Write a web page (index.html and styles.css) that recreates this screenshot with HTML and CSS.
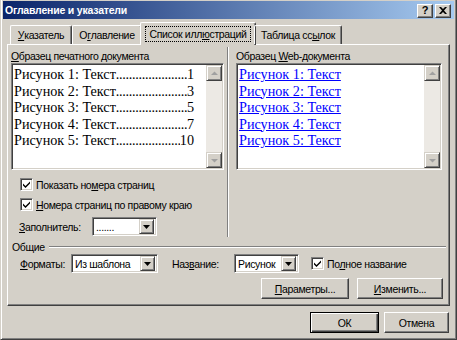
FILE: index.html
```html
<!DOCTYPE html>
<html>
<head>
  <title>Оглавление и указатели</title>
  <link rel="stylesheet" href="styles.css">
</head>
<body>
  <div class="window">
    <div class="titlebar">
      <span class="title">Оглавление и указатели</span>
      <div class="caption-buttons">
        <span class="cap-btn help">?</span>
        <span class="cap-btn">
          <svg width="8" height="7" viewBox="0 0 8 7"><path d="M0 0h2l2 2 2-2h2L5 3.5 8 7H6L4 5 2 7H0l3-3.5z" fill="#000"/></svg>
        </span>
      </div>
    </div>

    <div class="tabs">
      <div class="tab t1"><u>У</u>казатель</div>
      <div class="tab t2">О<u>г</u>лавление</div>
      <div class="tab t3 active"><span class="focus">Список илл<u>ю</u>страций</span></div>
      <div class="tab t4">Таблица сс<u>ы</u>лок</div>
    </div>

    <div class="panel">
      <div class="previews">
        <div class="preview print">
          <div class="caption"><u>О</u>бразец печатного документа</div>
          <div class="listbox">
            <div class="lines">
              <div class="line"><span>Рисунок 1: Текст</span><span class="dots"></span><span>1</span></div>
              <div class="line"><span>Рисунок 2: Текст</span><span class="dots"></span><span>3</span></div>
              <div class="line"><span>Рисунок 3: Текст</span><span class="dots"></span><span>5</span></div>
              <div class="line"><span>Рисунок 4: Текст</span><span class="dots"></span><span>7</span></div>
              <div class="line"><span>Рисунок 5: Текст</span><span class="dots"></span><span>10</span></div>
            </div>
            <div class="scrollbar">
              <span class="arrow"><svg width="7" height="5" viewBox="0 0 7 5"><path d="M3.5 0.5L7 4H0z" fill="#a0a0a0"/></svg></span>
              <span class="track"></span>
              <span class="arrow"><svg width="7" height="5" viewBox="0 0 7 5"><path d="M0 1h7L3.5 4.5z" fill="#a0a0a0"/></svg></span>
            </div>
          </div>

          <div class="check-row first">
            <span class="checkbox"><svg width="7" height="7" viewBox="0 0 7 7"><path d="M0 2.5l2.5 2.5L7 0.5v2L2.5 7 0 4.5z" fill="#000"/></svg></span>
            <span>Показать но<u>м</u>ера страниц</span>
          </div>
          <div class="check-row">
            <span class="checkbox"><svg width="7" height="7" viewBox="0 0 7 7"><path d="M0 2.5l2.5 2.5L7 0.5v2L2.5 7 0 4.5z" fill="#000"/></svg></span>
            <span><u>Н</u>омера страниц по правому краю</span>
          </div>
          <div class="filler-row">
            <span class="field-label filler-label"><u>З</u>аполнитель:</span>
            <div class="combo filler">
              <span class="combo-text">.......</span>
              <span class="drop"><svg width="7" height="4" viewBox="0 0 7 4"><path d="M0 0h7L3.5 4z" fill="#000"/></svg></span>
            </div>
          </div>
        </div>

        <div class="preview web">
          <div class="caption">Образец <u>W</u>eb-документа</div>
          <div class="listbox">
            <div class="lines">
              <div class="line"><a href="#">Рисунок 1: Текст</a></div>
              <div class="line"><a href="#">Рисунок 2: Текст</a></div>
              <div class="line"><a href="#">Рисунок 3: Текст</a></div>
              <div class="line"><a href="#">Рисунок 4: Текст</a></div>
              <div class="line"><a href="#">Рисунок 5: Текст</a></div>
            </div>
            <div class="scrollbar">
              <span class="arrow"><svg width="7" height="5" viewBox="0 0 7 5"><path d="M3.5 0.5L7 4H0z" fill="#a0a0a0"/></svg></span>
              <span class="track"></span>
              <span class="arrow"><svg width="7" height="5" viewBox="0 0 7 5"><path d="M0 1h7L3.5 4.5z" fill="#a0a0a0"/></svg></span>
            </div>
          </div>
        </div>
      </div>

      <div class="group-title"><span>Общие</span></div>

      <div class="formats-row">
        <span class="field-label formats-label"><u>Ф</u>орматы:</span>
        <div class="combo formats">
          <span class="combo-text">Из шаблона</span>
          <span class="drop"><svg width="7" height="4" viewBox="0 0 7 4"><path d="M0 0h7L3.5 4z" fill="#000"/></svg></span>
        </div>
        <span class="field-label name-label">Наз<u>в</u>ание:</span>
        <div class="combo name">
          <span class="combo-text">Рисунок</span>
          <span class="drop"><svg width="7" height="4" viewBox="0 0 7 4"><path d="M0 0h7L3.5 4z" fill="#000"/></svg></span>
        </div>
        <span class="checkbox"><svg width="7" height="7" viewBox="0 0 7 7"><path d="M0 2.5l2.5 2.5L7 0.5v2L2.5 7 0 4.5z" fill="#000"/></svg></span>
        <span class="full-name">По<u>л</u>ное название</span>
      </div>

      <div class="panel-buttons">
        <span class="btn params"><u>П</u>араметры...</span>
        <span class="btn change"><u>И</u>зменить...</span>
      </div>
    </div>

    <div class="footer">
      <span class="btn ok">ОК</span>
      <span class="btn cancel">Отмена</span>
    </div>
  </div>
</body>
</html>
```

FILE: styles.css
```css
body {
  margin: 0;
  background: #d4d0c8;
  font-family: "Liberation Sans", Arial, sans-serif;
  font-size: 10px;
  letter-spacing: -0.35px;
  color: #000;
}
u {
  text-decoration: underline;
  text-underline-offset: 1px;
}
.window {
  width: 457px;
  height: 340px;
  box-sizing: border-box;
  background: #d4d0c8;
  border-left: 1px solid #d4d0c8;
  border-right: 1px solid #404040;
  border-bottom: 1px solid #404040;
  box-shadow: inset 1px 0 #fff, inset -1px -1px #808080;
  padding: 1px 2px 0 2px;
}

/* title bar */
.titlebar {
  height: 18px;
  display: flex;
  align-items: center;
  justify-content: space-between;
  background: linear-gradient(90deg, #0a246a 0%, #a6caf0 100%);
  padding: 0 3px 0 2px;
}
.title {
  color: #fff;
  font-weight: bold;
  font-size: 10.5px;
  letter-spacing: -0.2px;
}
.caption-buttons {
  display: flex;
  gap: 2px;
  margin-top: 1px;
}
.cap-btn {
  width: 16px;
  height: 14px;
  box-sizing: border-box;
  background: #d4d0c8;
  border: 1px solid;
  border-color: #fff #404040 #404040 #fff;
  box-shadow: inset -1px -1px #808080;
  display: flex;
  align-items: center;
  justify-content: center;
  font-weight: bold;
  font-size: 11px;
  letter-spacing: 0;
  line-height: 1;
}

/* tabs */
.tabs {
  display: flex;
  align-items: flex-end;
  height: 22px;
  margin-top: 3px;
  padding-left: 7px;
  position: relative;
  z-index: 1;
}
.tab {
  height: 19px;
  box-sizing: border-box;
  display: flex;
  align-items: center;
  justify-content: center;
  border-top: 1px solid #fff;
  border-left: 1px solid #fff;
  border-right: 1px solid #404040;
  box-shadow: inset -1px 0 #808080;
  border-radius: 2px 2px 0 0;
  font-size: 10.5px;
}
.t1 { width: 62px; }
.t2 { width: 70px; }
.t3 { width: 112px; }
.t4 { width: 88px; }
.tab.active {
  margin: 0 -2px -1px -2px;
  width: 116px;
  background: #d4d0c8;
  height: 23px;
  padding-bottom: 1px;
}
.focus {
  outline: 1px dotted #000;
  outline-offset: 1px;
  padding: 0 2px;
}

/* panel */
.panel {
  height: 262px;
  box-sizing: border-box;
  margin: 0 4px;
  border-top: 1px solid #fff;
  border-left: 1px solid #fff;
  border-right: 1px solid #404040;
  border-bottom: 1px solid #404040;
  box-shadow: inset -1px -1px #808080;
}
.previews {
  display: flex;
  height: 192px;
}
.preview {
  padding-top: 5px;
}
.print {
  width: 216px;
  padding-left: 3px;
}
.web {
  flex: 1;
  margin-top: 2px;
  padding-top: 3px;
  padding-left: 8px;
  border-left: 1px solid #808080;
  box-shadow: inset 1px 0 #fff;
  margin-right: 2px;
}
.caption {
  height: 12px;
  line-height: 12px;
  font-size: 10.5px;
  margin-bottom: 1px;
}
.listbox {
  height: 107px;
  box-sizing: border-box;
  display: flex;
  background: #fff;
  border: 1px solid;
  border-color: #808080 #fff #fff #808080;
  box-shadow: inset 1px 1px #404040, inset -1px -1px #d4d0c8;
  padding: 1px;
}
.print .listbox {
  width: 213px;
}
.web .listbox {
  width: 206px;
}
.lines {
  flex: 1;
  padding: 1px 12px 0 1px;
  font-family: "Liberation Serif", "Times New Roman", serif;
  font-size: 14.2px;
  letter-spacing: 0;
  line-height: 16.5px;
  overflow: hidden;
}
.line {
  display: flex;
  white-space: nowrap;
}
.dots {
  flex: 1;
  overflow: hidden;
  letter-spacing: -0.3px;
}
.dots::before {
  content: "...........................................................................................";
}
.line a {
  color: #0000ff;
  text-decoration: underline;
}
.scrollbar {
  width: 16px;
  display: flex;
  flex-direction: column;
  background: #ece9e4;
}
.arrow {
  width: 16px;
  height: 16px;
  box-sizing: border-box;
  background: #d4d0c8;
  border: 1px solid;
  border-color: #d4d0c8 #404040 #404040 #d4d0c8;
  box-shadow: inset 1px 1px #fff, inset -1px -1px #808080;
  display: flex;
  align-items: center;
  justify-content: center;
}
.track {
  flex: 1;
}

/* checkboxes and fields */
.check-row {
  display: flex;
  align-items: center;
  gap: 3px;
  height: 13px;
  margin-left: 9px;
  margin-top: 7px;
  font-size: 10.5px;
}
.check-row.first {
  margin-top: 8px;
}
.checkbox {
  width: 13px;
  height: 13px;
  box-sizing: border-box;
  flex: none;
  background: #fff;
  border: 1px solid;
  border-color: #808080 #fff #fff #808080;
  box-shadow: inset 1px 1px #404040, inset -1px -1px #d4d0c8;
  display: flex;
  align-items: center;
  justify-content: center;
}
.filler-row {
  display: flex;
  align-items: center;
  margin-top: 6px;
  margin-left: 8px;
}
.field-label {
  font-size: 10.5px;
  flex: none;
}
.filler-label { width: 73px; }
.combo {
  height: 19px;
  box-sizing: border-box;
  display: flex;
  align-items: center;
  background: #fff;
  border: 1px solid;
  border-color: #808080 #fff #fff #808080;
  box-shadow: inset 1px 1px #404040, inset -1px -1px #d4d0c8;
  padding: 2px;
  font-size: 10.5px;
}
.combo-text {
  flex: 1;
  padding-left: 1px;
  white-space: nowrap;
  overflow: hidden;
}
.drop {
  width: 15px;
  height: 15px;
  box-sizing: border-box;
  background: #d4d0c8;
  border: 1px solid;
  border-color: #d4d0c8 #404040 #404040 #d4d0c8;
  box-shadow: inset 1px 1px #fff, inset -1px -1px #808080;
  display: flex;
  align-items: center;
  justify-content: center;
}
.filler { width: 65px; }

/* general group */
.group-title {
  display: flex;
  align-items: center;
  gap: 4px;
  height: 12px;
  margin: 4px 3px 0 4px;
  font-size: 10.5px;
}
.group-title::after {
  content: "";
  flex: 1;
  height: 2px;
  box-sizing: border-box;
  border-top: 1px solid #808080;
  border-bottom: 1px solid #fff;
}
.formats-row {
  display: flex;
  align-items: center;
  margin-top: 1px;
  padding-left: 12px;
}
.formats-label { width: 51px; }
.formats { width: 87px; }
.name-label { width: 62px; margin-left: 14px; }
.name { width: 65px; }
.formats-row .checkbox { margin-left: 12px; }
.full-name {
  margin-left: 3px;
  font-size: 10.5px;
}

/* buttons */
.btn {
  height: 21px;
  box-sizing: border-box;
  display: flex;
  align-items: center;
  justify-content: center;
  background: #d4d0c8;
  border: 1px solid;
  border-color: #fff #404040 #404040 #fff;
  box-shadow: inset -1px -1px #808080;
  font-size: 10.5px;
}
.panel-buttons {
  display: flex;
  justify-content: flex-end;
  gap: 8px;
  margin-top: 5px;
  padding-right: 6px;
}
.params { width: 88px; }
.change { width: 86px; }
.footer {
  display: flex;
  justify-content: flex-end;
  gap: 5px;
  margin-top: 6px;
  padding-right: 5px;
}
.ok {
  width: 69px;
  border: 1px solid #000;
  box-shadow: inset 1px 1px #fff, inset -1px -1px #404040, inset -2px -2px #808080;
}
.cancel { width: 65px; }
```
